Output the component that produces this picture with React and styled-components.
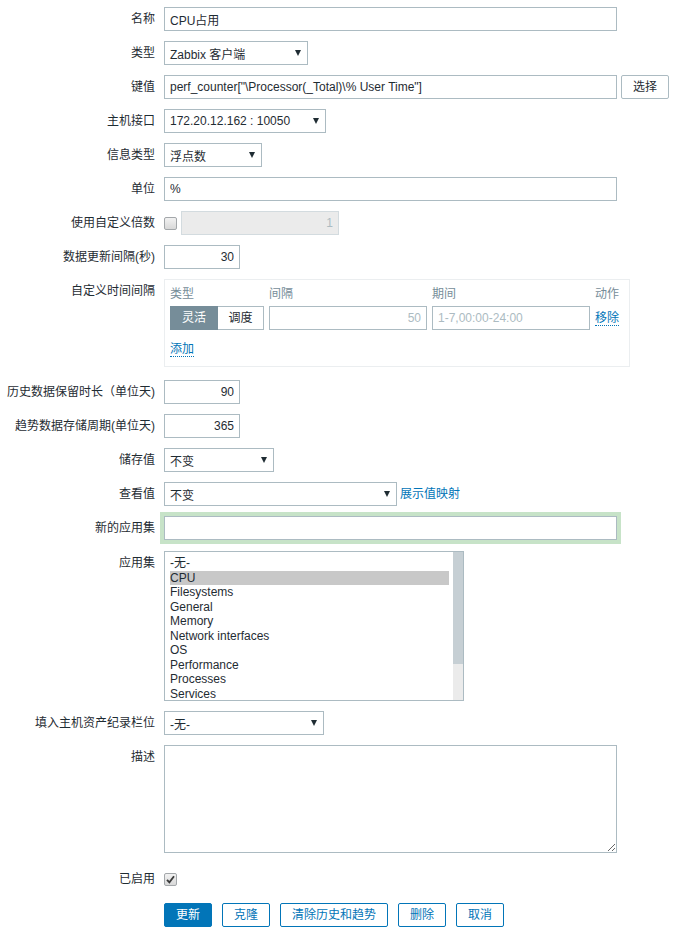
import React from 'react'
import styled, { createGlobalStyle } from 'styled-components'

const GlobalStyle = createGlobalStyle`
  * { box-sizing: border-box; }
  body {
    margin: 0;
    background: #fff;
    color: #1f2c33;
    font-family: "Liberation Sans", Arial, "Noto Sans CJK SC", sans-serif;
    font-size: 12px;
  }
`

const Form = styled.div`
  display: flex;
  flex-direction: column;
  gap: 10px;
  width: 682px;
  padding: 7px 0;
`

const Row = styled.div`
  display: grid;
  grid-template-columns: 155px 1fr;
  column-gap: 9px;
  align-items: start;
  margin-top: ${(p) => p.$mt || 0}px;
  margin-bottom: ${(p) => p.$mb || 0}px;
`

const Label = styled.div`
  text-align: right;
  line-height: 24px;
  white-space: nowrap;
`

const Field = styled.div`
  display: flex;
  align-items: center;
  min-height: 24px;
  gap: ${(p) => (p.$gap === undefined ? 4 : p.$gap)}px;
`

const TextInput = styled.input`
  width: ${(p) => p.$w}px;
  height: 24px;
  margin: 0;
  padding: 0 5px;
  border: 1px solid #acbbc2;
  border-radius: 0;
  background: #fff;
  color: #1f2c33;
  font: inherit;
  text-align: ${(p) => (p.$right ? 'right' : 'left')};
  outline: none;
  box-shadow: ${(p) => (p.$glow ? '0 0 0 4px #c7e3c8' : 'none')};

  &::placeholder {
    color: #acbbc2;
    opacity: 1;
  }

  &:disabled {
    background: #ebebeb;
    border-color: #d3dbdf;
    color: #acbbc2;
  }
`

const SelectBox = styled.div`
  width: ${(p) => p.$w}px;
  height: 24px;
  padding: 0 5px;
  border: 1px solid #acbbc2;
  background: #fff;
  display: flex;
  align-items: center;
  justify-content: space-between;
  white-space: nowrap;

  &::after {
    content: '';
    margin-right: 1px;
    border-left: 3.5px solid transparent;
    border-right: 3.5px solid transparent;
    border-top: 6px solid #1f2c33;
  }
`

const GreyButton = styled.button`
  height: 24px;
  padding: 0 11px;
  border: 1px solid #acbbc2;
  border-radius: 2px;
  background: #fff;
  color: #1f2c33;
  font: inherit;
  line-height: 22px;
`

const Link = styled.a`
  color: #0275b8;
  text-decoration: none;
  line-height: 16px;
  border-bottom: ${(p) => (p.$dotted ? '1px dotted #0275b8' : 'none')};
  cursor: pointer;
`

const Check = styled.span`
  display: inline-flex;
  align-items: center;
  justify-content: center;
  width: 13px;
  height: 13px;
  border: 1px solid #a3a7aa;
  border-radius: 2px;
  background: linear-gradient(#f2f2f2, #d8d8d8);
`

const IntervalBox = styled.div`
  width: 466px;
  border: 1px solid #ebeef0;
  padding: 2px 5px 5px 5px;
  margin-bottom: 3px;
`

const IntervalGrid = styled.div`
  display: grid;
  grid-template-columns: 94px 158px 158px auto;
  column-gap: 5px;
  align-items: center;
`

const HeadCell = styled.div`
  color: #768d99;
  line-height: 24px;
`

const Toggle = styled.div`
  display: flex;
  height: 24px;
`

const ToggleOption = styled.div`
  width: ${(p) => p.$w}px;
  height: 24px;
  line-height: 22px;
  text-align: center;
  border: 1px solid ${(p) => (p.$on ? '#768d99' : '#acbbc2')};
  border-left-width: ${(p) => (p.$on ? 1 : 0)}px;
  background: ${(p) => (p.$on ? '#768d99' : '#fff')};
  color: ${(p) => (p.$on ? '#fff' : '#1f2c33')};
`

const AddLine = styled.div`
  margin-top: 7px;
  line-height: 24px;
`

const ListBox = styled.div`
  width: 300px;
  height: 150px;
  border: 1px solid #acbbc2;
  display: flex;
  overflow: hidden;
`

const ListItems = styled.div`
  flex: 1;
  padding: 4px 4px 0 5px;
`

const ListItem = styled.div`
  height: 14.5px;
  line-height: 14.5px;
  white-space: nowrap;
  background: ${(p) => (p.$selected ? '#c8c8c8' : 'transparent')};
`

const ScrollTrack = styled.div`
  width: 10px;
  background: #ebebeb;
`

const ScrollThumb = styled.div`
  height: 112px;
  background: #c6cfd4;
`

const TextArea = styled.textarea`
  width: 453px;
  height: 108px;
  margin: 0;
  padding: 5px;
  border: 1px solid #acbbc2;
  border-radius: 0;
  font: inherit;
  color: #1f2c33;
  resize: both;
  outline: none;
`

const Buttons = styled.div`
  display: flex;
  gap: 10px;
`

const Button = styled.button`
  height: 24px;
  padding: 0 11px;
  border: 1px solid #0275b8;
  border-radius: 2px;
  background: ${(p) => (p.$primary ? '#0275b8' : '#fff')};
  color: ${(p) => (p.$primary ? '#fff' : '#0275b8')};
  font: inherit;
  line-height: 22px;
  cursor: pointer;
`

const applications = [
  '-无-',
  'CPU',
  'Filesystems',
  'General',
  'Memory',
  'Network interfaces',
  'OS',
  'Performance',
  'Processes',
  'Services',
]

function CheckMark() {
  return (
    <svg width="9" height="9" viewBox="0 0 9 9">
      <path d="M1 4.8 L3.4 7.4 L8 1.2" fill="none" stroke="#3a3a3a" strokeWidth="1.8" />
    </svg>
  )
}

export default function App() {
  return (
    <>
      <GlobalStyle />
      <Form>
        <Row>
          <Label>名称</Label>
          <Field>
            <TextInput $w={453} defaultValue="CPU占用" />
          </Field>
        </Row>
        <Row>
          <Label>类型</Label>
          <Field>
            <SelectBox $w={144}>Zabbix 客户端</SelectBox>
          </Field>
        </Row>
        <Row>
          <Label>键值</Label>
          <Field>
            <TextInput $w={453} defaultValue={'perf_counter["\\Processor(_Total)\\% User Time"]'} />
            <GreyButton>选择</GreyButton>
          </Field>
        </Row>
        <Row>
          <Label>主机接口</Label>
          <Field>
            <SelectBox $w={162}>172.20.12.162 : 10050</SelectBox>
          </Field>
        </Row>
        <Row>
          <Label>信息类型</Label>
          <Field>
            <SelectBox $w={98}>浮点数</SelectBox>
          </Field>
        </Row>
        <Row>
          <Label>单位</Label>
          <Field>
            <TextInput $w={453} defaultValue="%" />
          </Field>
        </Row>
        <Row>
          <Label>使用自定义倍数</Label>
          <Field>
            <Check />
            <TextInput $w={158} $right disabled defaultValue="1" />
          </Field>
        </Row>
        <Row>
          <Label>数据更新间隔(秒)</Label>
          <Field>
            <TextInput $w={76} $right defaultValue="30" />
          </Field>
        </Row>
        <Row>
          <Label>自定义时间间隔</Label>
          <IntervalBox>
            <IntervalGrid>
              <HeadCell>类型</HeadCell>
              <HeadCell>间隔</HeadCell>
              <HeadCell>期间</HeadCell>
              <HeadCell>动作</HeadCell>
              <Toggle>
                <ToggleOption $w={48} $on>灵活</ToggleOption>
                <ToggleOption $w={46}>调度</ToggleOption>
              </Toggle>
              <TextInput $w={158} $right placeholder="50" />
              <TextInput $w={158} placeholder="1-7,00:00-24:00" />
              <div>
                <Link $dotted>移除</Link>
              </div>
            </IntervalGrid>
            <AddLine>
              <Link $dotted>添加</Link>
            </AddLine>
          </IntervalBox>
        </Row>
        <Row>
          <Label>历史数据保留时长（单位天)</Label>
          <Field>
            <TextInput $w={76} $right defaultValue="90" />
          </Field>
        </Row>
        <Row>
          <Label>趋势数据存储周期(单位天)</Label>
          <Field>
            <TextInput $w={76} $right defaultValue="365" />
          </Field>
        </Row>
        <Row>
          <Label>储存值</Label>
          <Field>
            <SelectBox $w={110}>不变</SelectBox>
          </Field>
        </Row>
        <Row>
          <Label>查看值</Label>
          <Field $gap={3}>
            <SelectBox $w={233}>不变</SelectBox>
            <Link>展示值映射</Link>
          </Field>
        </Row>
        <Row $mb={1}>
          <Label>新的应用集</Label>
          <Field>
            <TextInput $w={453} $glow />
          </Field>
        </Row>
        <Row>
          <Label>应用集</Label>
          <ListBox>
            <ListItems>
              {applications.map((name) => (
                <ListItem key={name} $selected={name === 'CPU'}>
                  {name}
                </ListItem>
              ))}
            </ListItems>
            <ScrollTrack>
              <ScrollThumb />
            </ScrollTrack>
          </ListBox>
        </Row>
        <Row>
          <Label>填入主机资产纪录栏位</Label>
          <Field>
            <SelectBox $w={160}>-无-</SelectBox>
          </Field>
        </Row>
        <Row>
          <Label>描述</Label>
          <Field>
            <TextArea />
          </Field>
        </Row>
        <Row $mt={4}>
          <Label>已启用</Label>
          <Field>
            <Check>
              <CheckMark />
            </Check>
          </Field>
        </Row>
        <Row $mt={2}>
          <div />
          <Buttons>
            <Button $primary>更新</Button>
            <Button>克隆</Button>
            <Button>清除历史和趋势</Button>
            <Button>删除</Button>
            <Button>取消</Button>
          </Buttons>
        </Row>
      </Form>
    </>
  )
}
